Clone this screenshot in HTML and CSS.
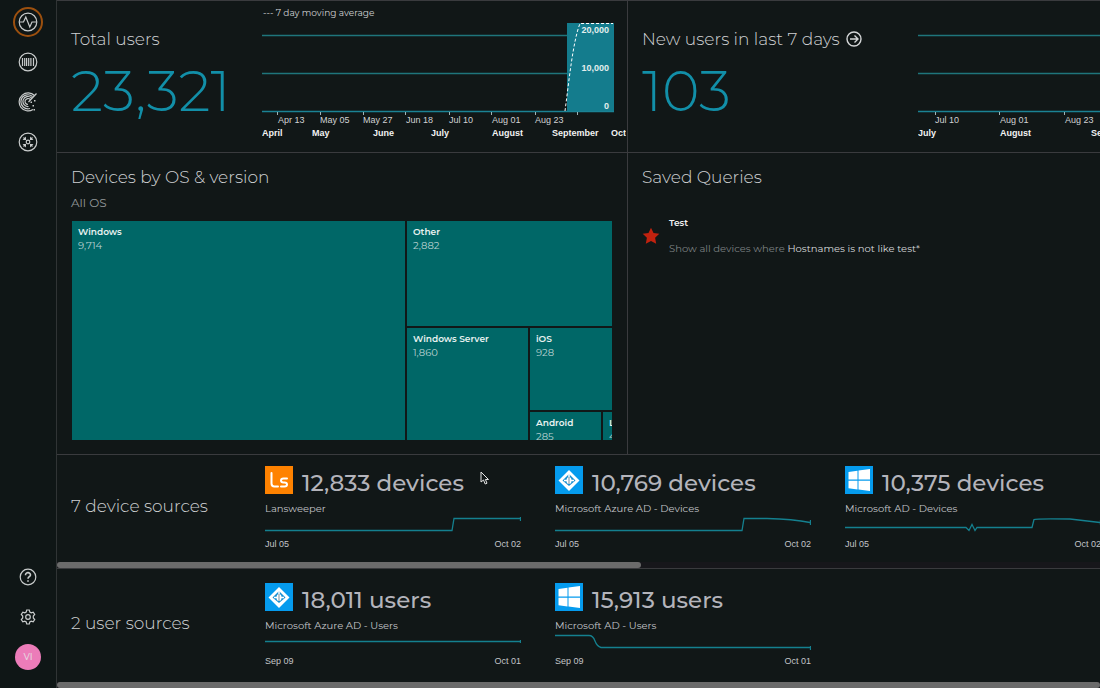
FILE: index.html
```html
<!DOCTYPE html>
<html lang="en">
<head>
<meta charset="utf-8">
<title>Dashboard</title>
<link rel="stylesheet" href="styles.css">
</head>
<body>
<svg class="defs" aria-hidden="true">
  <symbol id="azure" viewBox="0 0 28 28">
    <rect width="28" height="28" fill="#059bee"/>
    <path d="M14 4 24.500 14.500 14 25 3.500 14.500Z" fill="#fff"/>
    <path d="M14 8 20.500 14.500 14 20 7.500 14.500Z" fill="#178fd2"/>
    <path d="M14 6.500V11M9 14.500h3M16 14.500h3" stroke="#fff" stroke-width="1.5"/>
    <ellipse cx="14" cy="14.500" rx="2.500" ry="3.500" fill="#fff"/>
    <path d="M14 11v7" stroke="#7d8f9c"/>
  </symbol>
  <symbol id="windows" viewBox="0 0 28 28">
    <rect width="28" height="28" fill="#059bee"/>
    <path d="M3.500 6 12.500 4.800V13.500H3.500Z M13.500 4.600 25 3V13.500H13.500Z M3.500 14.700H12.500V23.500L3.500 22.300Z M13.500 14.700H25V25L13.500 23.500Z" fill="#fff"/>
  </symbol>
</svg>
<div class="app">
  <nav class="sidebar" aria-label="Main">
    <button class="nav-btn nav-btn--active" aria-label="Activity"><svg class="icon" viewBox="0 0 20 20"><circle cx="10" cy="10" r="8.800"/><path d="M1.500 10H5.500L7.800 5 11.800 15 14 10h4.500"/></svg></button>
    <button class="nav-btn" aria-label="Devices"><svg class="icon" viewBox="0 0 20 20"><circle cx="10" cy="10" r="8.800"/><path d="M4.500 6v8M6.700 6v8M8.600 6v8M10.700 6v8M12.900 6v8M15.500 6v8"/></svg></button>
    <button class="nav-btn" aria-label="Radar"><svg class="icon" viewBox="0 0 20 20"><path d="M16.500 3.500A9 9 0 1 0 15 17.500M14.500 4.500A7 7 0 1 0 12 16.500M13.500 6A5 5 0 1 0 10.500 14.500M12.300 7.500A3 3 0 1 0 10 12.500M10.500 10 18.500 1.500"/><path class="dots" d="M12.500 9.500h1.500v1.500h-1.500zM16 8h1.500v1.500H16zM14.500 13H16v1.500h-1.500zM15.500 17H17v1.500h-1.500z"/></svg></button>
    <button class="nav-btn" aria-label="Network"><svg class="icon" viewBox="0 0 20 20"><circle cx="10" cy="10" r="8.800"/><circle cx="10" cy="10" r="1.800"/><path d="M7.800 7.800 5.500 5.500M12.200 7.800 14.500 5.500M7.800 12.200 5.500 14.500M12.200 12.200 14.500 14.500"/><path class="dots" d="M4.500 8 8 8 8 4.500zM15.500 8 12 8 12 4.500zM4.500 12 8 12 8 15.500zM15.500 12 12 12 12 15.500z"/></svg></button>
    <button class="nav-btn nav-btn--help" aria-label="Help"><svg class="icon" viewBox="0 0 20 20"><circle cx="10" cy="10" r="7.800"/><path class="bold" d="M7.500 8.200C7.500 4.700 12.600 5 12.500 8 12.400 9.700 10 9.800 10 11.700M10 13.300v1.400"/></svg></button>
    <button class="nav-btn" aria-label="Settings"><svg class="icon" viewBox="0 0 20 20"><circle cx="10" cy="10" r="2.300"/><path d="M8.700 3h2.600l.5 2 1.400.8 2-.7 1.500 2.300-1.400 1.600v2l1.400 1.600-1.500 2.300-2-.7-1.400.8-.5 2H8.700l-.5-2-1.400-.8-2 .7-1.500-2.300L4.700 11V9L3.300 7.400l1.500-2.300 2 .7L8.200 5z"/></svg></button>
    <button class="nav-btn"><span class="avatar">VI</span></button>
  </nav>

  <main class="board">
    <section class="panel stat">
      <div class="stat-info">
        <h2 class="title">Total users</h2>
        <p class="figure">23,321</p>
      </div>
      <svg class="chart" width="364" height="150" viewBox="0 0 364 150" role="img" aria-label="Total users over time">
        <text class="legend" x="1" y="15">--- 7 day moving average</text>
        <path class="grid-line" d="M0 34.500H352M0 72.500H352"/>
        <path class="base-line" d="M0 110.500H352"/>
        <rect class="bar" x="305" y="22" width="47" height="88"/>
        <path class="average" d="M303 110C307 80 311 40 318 22.500H351"/>
        <path class="tick" d="M15.500 111v3M58.500 111v3M101.500 111v3M143.500 111v3M187.500 111v3M229.500 111v3M273.500 111v3M315.500 111v3"/>
        <g class="scale"><text x="347" y="32">20,000</text><text x="347" y="70">10,000</text><text x="347" y="108">0</text></g>
        <g class="days"><text x="16" y="122">Apr 13</text><text x="58" y="122">May 05</text><text x="101" y="122">May 27</text><text x="144" y="122">Jun 18</text><text x="187" y="122">Jul 10</text><text x="230" y="122">Aug 01</text><text x="273" y="122">Aug 23</text></g>
        <g class="months"><text x="0" y="135">April</text><text x="50" y="135">May</text><text x="111" y="135">June</text><text x="169" y="135">July</text><text x="230" y="135">August</text><text x="290" y="135">September</text><text x="349" y="135">Oct</text></g>
      </svg>
    </section>

    <section class="panel stat stat--wide">
      <div class="stat-info">
        <h2 class="title"><a class="title-link" href="#new-users">New users in last 7 days <svg class="arrow" viewBox="0 0 16 16" aria-hidden="true"><circle cx="8" cy="8" r="7"/><path d="M4 8h8M8.500 4.500 12 8l-3.500 3.500"/></svg></a></h2>
        <p class="figure">103</p>
      </div>
      <svg class="chart" width="364" height="150" viewBox="0 0 364 150" role="img" aria-label="New users over time">
        <path class="grid-line" d="M0 34.500H352M0 72.500H352"/>
        <path class="base-line" d="M0 110.500H352"/>
        <path class="tick" d="M17.500 111v3M81.500 111v3M146.500 111v3"/>
        <g class="days"><text x="17" y="122">Jul 10</text><text x="82" y="122">Aug 01</text><text x="147" y="122">Aug 23</text></g>
        <g class="months"><text x="0" y="135">July</text><text x="82" y="135">August</text><text x="173" y="135">September</text></g>
      </svg>
    </section>

    <section class="panel">
      <h2 class="title">Devices by OS &amp; version</h2>
      <p class="subtitle">All OS</p>
      <div class="treemap">
        <div class="tile tile--windows"><b class="tile-name">Windows</b>9,714</div>
        <div class="tile tile--other"><b class="tile-name">Other</b>2,882</div>
        <div class="tile tile--server"><b class="tile-name">Windows Server</b>1,860</div>
        <div class="tile tile--ios"><b class="tile-name">iOS</b>928</div>
        <div class="tile"><b class="tile-name">Android</b>285</div>
        <div class="tile"><b class="tile-name">L</b>4</div>
      </div>
    </section>

    <section class="panel">
      <h2 class="title">Saved Queries</h2>
      <div class="query">
        <svg class="star" viewBox="0 0 18 18" aria-hidden="true"><path d="M9 .8 11.500 6 17.300 6.800 13.100 10.800 14.200 16.800 9 14 3.800 16.800 4.900 10.800.7 6.800 6.500 6Z"/></svg>
        <div>
          <h3 class="query-name">Test</h3>
          <p class="query-text">Show all devices where <span class="query-term">Hostnames is not like test*</span></p>
        </div>
      </div>
    </section>

    <section class="sources">
      <h2 class="title sources-title">7 device sources</h2>
      <div class="cards">
        <article class="card">
          <div class="card-head"><svg class="logo" viewBox="0 0 28 28" aria-hidden="true"><rect width="28" height="28" fill="#ff8200"/><path d="M6.500 7V17.500Q6.500 20.500 9.500 20.500H13M22 12.500H18.500Q16 12.500 16 14.500T18.500 16.500H19.500Q22 16.500 22 18.500T19.500 20.500H16" fill="none" stroke="#fff" stroke-width="2" stroke-linecap="round"/></svg><span>12,833 devices</span></div>
          <p class="card-name">Lansweeper</p>
          <svg class="spark" viewBox="0 0 256 18" preserveAspectRatio="none"><path d="M0 14.500H187L189 2.500H255M255.500 1v4"/></svg>
          <p class="card-dates"><span>Jul 05</span><span>Oct 02</span></p>
        </article>
        <article class="card">
          <div class="card-head"><svg class="logo" aria-hidden="true"><use href="#azure"/></svg><span>10,769 devices</span></div>
          <p class="card-name">Microsoft Azure AD - Devices</p>
          <svg class="spark" viewBox="0 0 256 18" preserveAspectRatio="none"><path d="M0 14.500H187L189 2.500H212Q238 3 255 6.500M255.500 4v5"/></svg>
          <p class="card-dates"><span>Jul 05</span><span>Oct 02</span></p>
        </article>
        <article class="card">
          <div class="card-head"><svg class="logo" aria-hidden="true"><use href="#windows"/></svg><span>10,375 devices</span></div>
          <p class="card-name">Microsoft AD - Devices</p>
          <svg class="spark" viewBox="0 0 256 18" preserveAspectRatio="none"><path d="M0 11.500H121L124 14.500 127 8.500 130 14.500 132 11.500H187L189 3.500Q191 2.500 225 3L255 6.500M255.500 4v5"/></svg>
          <p class="card-dates"><span>Jul 05</span><span>Oct 02</span></p>
        </article>
      </div>
      <div class="scroll"><div class="scroll-thumb scroll-thumb--part"></div></div>
    </section>

    <section class="sources sources--users">
      <h2 class="title sources-title">2 user sources</h2>
      <div class="cards">
        <article class="card">
          <div class="card-head"><svg class="logo" aria-hidden="true"><use href="#azure"/></svg><span>18,011 users</span></div>
          <p class="card-name">Microsoft Azure AD - Users</p>
          <svg class="spark" viewBox="0 0 256 18" preserveAspectRatio="none"><path d="M0 8.500H255M255.500 7v3"/></svg>
          <p class="card-dates"><span>Sep 09</span><span>Oct 01</span></p>
        </article>
        <article class="card">
          <div class="card-head"><svg class="logo" aria-hidden="true"><use href="#windows"/></svg><span>15,913 users</span></div>
          <p class="card-name">Microsoft AD - Users</p>
          <svg class="spark" viewBox="0 0 256 18" preserveAspectRatio="none"><path d="M0 2.500H34Q38 2.500 40 8T46 14.500H255M255.500 13v4"/></svg>
          <p class="card-dates"><span>Sep 09</span><span>Oct 01</span></p>
        </article>
      </div>
      <div class="scroll"><div class="scroll-thumb"></div></div>
    </section>
  </main>
</div>
<svg class="cursor" viewBox="0 0 10 14" aria-hidden="true"><path d="M1 1V11L3.500 9 5.200 13 7 12.200 5.400 8.500H8.500Z"/></svg>
</body>
</html>
```
FILE: styles.css
```css
* { box-sizing: border-box; }

body {
  margin: 0;
  background: #111717;
  color: #c3c5c8;
  font: 10px/14px Montserrat, Inter, sans-serif;
  overflow: hidden;
}

h2, h3, p { margin: 0; font-weight: inherit; }

.defs { position: absolute; width: 0; height: 0; }

.app { display: flex; min-height: 100vh; }

.sidebar {
  flex: none;
  width: 57px;
  display: flex;
  flex-direction: column;
  align-items: center;
  gap: 10px;
  padding: 7px 0 16px;
  background: #0f1616;
  border-right: 1px solid #303435;
}

.nav-btn {
  width: 30px;
  height: 30px;
  padding: 0;
  display: grid;
  place-items: center;
  background: none;
  border: 1px solid transparent;
  border-radius: 50%;
}
.nav-btn--active { border: 2px solid #9c500f; }
.nav-btn--help { margin-top: auto; }

.icon {
  width: 20px;
  height: 20px;
  fill: none;
  stroke: #c9cccc;
  stroke-width: 1.2;
}
.icon .dots { fill: #c9cccc; stroke: none; }
.icon .bold { stroke-width: 1.6; }

.avatar {
  width: 26px;
  height: 26px;
  border-radius: 50%;
  background: #ec7cb9;
  color: #e6d3de;
  font: 500 9px/26px Montserrat, Inter, sans-serif;
}

.board {
  flex: 1;
  min-width: 0;
  overflow: hidden;
  display: grid;
  grid-template-columns: repeat(2, minmax(571px, 1fr));
  grid-template-rows: 152px auto auto 1fr;
}

.panel {
  padding: 13px 15px 14px 14px;
  border-top: 1px solid #3a3b3e;
  border-right: 1px solid #3a3b3e;
  overflow: hidden;
}

.title {
  font-size: 17px;
  line-height: 22px;
  font-weight: 300;
  color: #cfd1d3;
}

.subtitle { margin-top: 7px; font-size: 12px; line-height: 16px; color: #93989a; }

.stat { display: flex; padding: 0 0 0 14px; }
.stat-info { flex: 0 0 191px; padding-top: 27px; }
.stat--wide .stat-info { flex-basis: 276px; }

.title-link {
  display: flex;
  align-items: center;
  gap: 6px;
  color: inherit;
  text-decoration: none;
}
.arrow { width: 16px; height: 16px; fill: none; stroke: #d5d7d8; stroke-width: 1.4; }

.figure {
  margin-top: 9px;
  font: 300 57px/64px Montserrat, Lato, sans-serif;
  color: #128fa8;
}

.chart { flex: none; font: 9px "Liberation Sans", sans-serif; fill: #d0d2d3; }
.legend { font: 9px Montserrat, Inter, sans-serif; }
.grid-line { stroke: #1f757b; stroke-width: 1.4; fill: none; }
.base-line { stroke: #1b8294; stroke-width: 1.4; fill: none; }
.bar { fill: #147c8d; }
.average { fill: none; stroke: #fff; stroke-dasharray: 3 2; }
.tick { stroke: #9fb4b6; }
.scale { font-weight: bold; text-anchor: end; fill: #e3eeee; }
.months { font-weight: bold; fill: #f2f2f2; }

.treemap {
  margin: 10px 0 0 1px;
  height: 219px;
  display: grid;
  gap: 2px;
  grid-template-columns: 333fr 121fr 71fr 9fr;
  grid-template-rows: 105fr 82fr 28fr;
}
.tile {
  min-width: 0;
  min-height: 0;
  overflow: hidden;
  padding: 4px 0 0 6px;
  background: #006767;
  color: #b9d2d1;
}
.tile-name { display: block; font-size: 9px; font-weight: 600; color: #e8f1f0; }
.tile--windows { grid-row: span 3; }
.tile--other { grid-column: span 3; }
.tile--server { grid-row: span 2; }
.tile--ios { grid-column: span 2; }

.query { display: flex; align-items: center; gap: 9px; margin-top: 28px; }
.star { flex: none; width: 18px; height: 18px; fill: #c1220f; }
.query-name { font-size: 9px; font-weight: 600; color: #f0f0f0; }
.query-text { margin-top: 12px; color: #7d8283; }
.query-term { color: #d8dadb; }

.sources {
  grid-column: 1 / -1;
  width: calc(100vw - 57px);
  overflow: hidden;
  display: grid;
  grid-template-columns: 194px 1fr;
  grid-template-rows: 1fr 6px;
  padding: 11px 0 0 14px;
  border-top: 1px solid #3a3b3e;
}
.sources--users { padding-top: 14px; }
.sources-title { padding-top: 29px; }
.cards { display: flex; gap: 34px; min-width: 0; padding-bottom: 11px; }
.sources--users .cards { padding-bottom: 0; }
.card { flex: none; width: 256px; }
.card-head {
  display: flex;
  gap: 9px;
  font-size: 23px;
  line-height: 34px;
  height: 28px;
  font-weight: 500;
  color: #b4b4bb;
}
.logo { width: 28px; height: 28px; flex: none; }
.card-name { margin-top: 8px; }
.spark { display: block; width: 100%; height: 18px; fill: none; stroke: #14808f; stroke-width: 1.3; }
.card-dates {
  display: flex;
  justify-content: space-between;
  margin-top: 3px;
  font: 9px/14px "Liberation Sans", sans-serif;
}

.scroll { grid-column: 1 / -1; margin-left: -14px; background: #17171b; }
.scroll-thumb { height: 6px; border-radius: 3px; background: #6b6b6b; }
.scroll-thumb--part { width: 56%; }

.cursor {
  position: absolute;
  left: 480px;
  top: 471px;
  width: 10px;
  height: 14px;
  fill: #111717;
  stroke: #e6e6e6;
}
```
